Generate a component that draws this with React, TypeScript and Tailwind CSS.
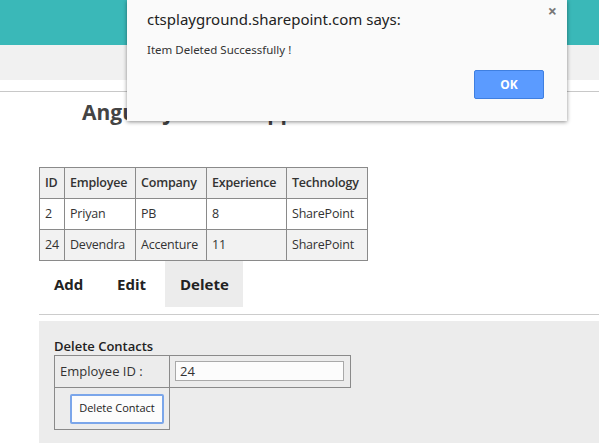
import React from "react";

// Employee rows shown in the list table.
const rows = [
  { id: "2", employee: "Priyan", company: "PB", experience: "8", tech: "SharePoint" },
  { id: "24", employee: "Devendra", company: "Accenture", experience: "11", tech: "SharePoint" },
];

const cell = "border border-[#8a8a8a] px-[5px] h-[31px] text-left align-middle whitespace-nowrap";

export default function App() {
  return (
    <div className="relative w-[599px] h-[443px] overflow-hidden bg-white text-[#333] font-['Open_Sans','Noto_Sans',sans-serif]">
      {/* ── Site header ─────────────────────────────── */}
      <div className="h-[45px] bg-[#3ab8b8]" />
      <div className="h-[35px] bg-[#f1f1f1]" />
      <div className="mt-[11px] border-t border-[#c8c8c8]" />

      <h1 className="ml-[82px] mt-[5px] text-[21px] font-bold text-[#444] leading-[30px]">
        AngularJS CRUD App
      </h1>

      {/* ── Employee list ───────────────────────────── */}
      <div className="ml-[39px] mt-[40px] flex flex-col">
        <table className="self-start table-fixed w-[328px] border-collapse text-[12.5px] tracking-[-0.2px] text-[#333]">
          <colgroup>
            <col className="w-[25px]" />
            <col className="w-[71px]" />
            <col className="w-[71px]" />
            <col className="w-[80px]" />
            <col className="w-[81px]" />
          </colgroup>
          <thead>
            <tr className="bg-[#f0f0f0]">
              <th className={`${cell} font-semibold`}>ID</th>
              <th className={`${cell} font-semibold`}>Employee</th>
              <th className={`${cell} font-semibold`}>Company</th>
              <th className={`${cell} font-semibold`}>Experience</th>
              <th className={`${cell} font-semibold`}>Technology</th>
            </tr>
          </thead>
          <tbody>
            {rows.map((r, i) => (
              <tr key={r.id} className={i % 2 === 1 ? "bg-[#f2f2f2]" : "bg-white"}>
                <td className={cell}>{r.id}</td>
                <td className={cell}>{r.employee}</td>
                <td className={cell}>{r.company}</td>
                <td className={cell}>{r.experience}</td>
                <td className={cell}>{r.tech}</td>
              </tr>
            ))}
          </tbody>
        </table>

        {/* tabs */}
        <div className="flex h-[46px] text-[15px] font-bold text-[#222]">
          <div className="flex items-center w-[63px] pl-[15px]">Add</div>
          <div className="flex items-center w-[63px] pl-[15px]">Edit</div>
          <div className="flex items-center w-[78px] pl-[15px] bg-[#ececec]">Delete</div>
        </div>
        <div className="mt-[7px] border-t border-[#cccccc]" />

        {/* ── Delete panel ───────────────────────────── */}
        <div className="mt-[6px] h-[130px] bg-[#ececec] px-[15px] pt-[16px]">
          <div className="text-[13px] font-semibold text-[#222] leading-[18px]">Delete Contacts</div>
          <table className="table-fixed w-[296px] border-collapse text-[13px]">
            <colgroup>
              <col className="w-[115px]" />
              <col className="w-[181px]" />
            </colgroup>
            <tbody>
              <tr className="h-[32px]">
                <td className="border border-[#8a8a8a] px-[5px] whitespace-nowrap">Employee ID :</td>
                <td className="border border-[#8a8a8a] px-[5px]">
                  <input
                    readOnly
                    value="24"
                    className="w-[169px] h-[20px] border border-[#a9a9a9] bg-[#fcfcfc] px-[4px] text-[13px] outline-none"
                  />
                </td>
              </tr>
              <tr className="h-[42px]">
                <td className="border border-[#8a8a8a] pl-[15px]">
                  <button className="w-[94px] h-[30px] border-2 border-[#7ba6ea] rounded-[2px] bg-[#fcfcfc] text-[11px] text-[#222] whitespace-nowrap">
                    Delete Contact
                  </button>
                </td>
                <td className="border-l border-t border-[#8a8a8a]" />
              </tr>
            </tbody>
          </table>
        </div>
      </div>

      {/* ── Browser alert dialog ────────────────────── */}
      <div className="absolute left-[127px] top-0 w-[440px] h-[121px] bg-[#fafafa] shadow-[0_1px_4px_rgba(0,0,0,0.45)] font-['Noto_Sans','Open_Sans',sans-serif]">
        <div className="absolute right-[10px] top-[-1px] text-[16px] text-[#777] font-bold">×</div>
        <div className="pl-[20px] pt-[8px] text-[15px] text-[#222]">ctsplayground.sharepoint.com says:</div>
        <div className="pl-[20px] pt-[10px] text-[11.5px] text-[#333]">Item Deleted Successfully !</div>
        <button className="absolute left-[347px] top-[70px] w-[70px] h-[29px] rounded-[2px] border border-[#3f7fe0] bg-[#5b9bff] text-[12px] font-bold text-white">
          OK
        </button>
      </div>
    </div>
  );
}
